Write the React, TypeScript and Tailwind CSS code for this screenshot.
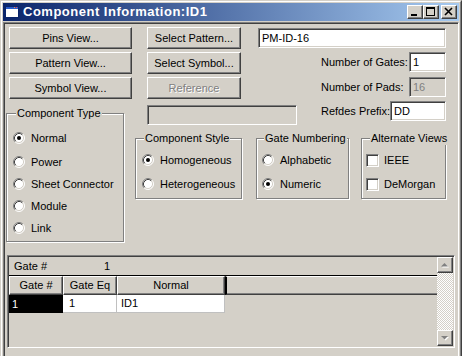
import React from 'react'

const raised = 'border border-white border-r-[#404040] border-b-[#404040] shadow-[inset_-1px_-1px_0_#808080]'
const sunken = 'border border-[#808080] border-r-white border-b-white shadow-[inset_1px_1px_0_#404040,inset_-1px_-1px_0_#d4d0c8]'

function Btn({ children, className = '', disabled }: { children: React.ReactNode; className?: string; disabled?: boolean }) {
  return (
    <div className={`h-[22px] flex items-center justify-center bg-[#d4d0c8] ${raised} ${className} ${disabled ? 'text-[#808080] [text-shadow:1px_1px_0_#fff]' : ''}`}>
      {children}
    </div>
  )
}

function Radio({ checked }: { checked?: boolean }) {
  return (
    <svg width="12" height="12" viewBox="0 0 12 12" className="shrink-0">
      <circle cx="6" cy="6" r="5" fill="#fff" />
      <path d="M2.11 9.89 A5.5 5.5 0 0 1 9.89 2.11" fill="none" stroke="#808080" />
      <path d="M9.89 2.11 A5.5 5.5 0 0 1 2.11 9.89" fill="none" stroke="#fff" />
      <path d="M2.82 9.18 A4.5 4.5 0 0 1 9.18 2.82" fill="none" stroke="#404040" />
      <path d="M9.18 2.82 A4.5 4.5 0 0 1 2.82 9.18" fill="none" stroke="#d4d0c8" />
      {checked && <circle cx="6" cy="6" r="2" fill="#000" />}
    </svg>
  )
}

function Option({ label, checked, className = '' }: { label: string; checked?: boolean; className?: string }) {
  return (
    <div className={`h-[16px] flex items-center gap-[6px] ${className}`}>
      <Radio checked={checked} />
      <span className="whitespace-nowrap">{label}</span>
    </div>
  )
}

function Check({ label }: { label: string }) {
  return (
    <div className="h-[16px] flex items-center gap-[5px]">
      <div className={`w-[13px] h-[13px] bg-white shrink-0 ${sunken}`} />
      <span>{label}</span>
    </div>
  )
}

function Group({ label, labelPos, className, children }: { label: string; labelPos: string; className: string; children: React.ReactNode }) {
  return (
    <div className={`relative shrink-0 border border-[#808080] shadow-[inset_1px_1px_0_#fff,1px_1px_0_#fff] ${className}`}>
      <span className={`absolute -top-[8px] ${labelPos} bg-[#d4d0c8] px-px leading-[14px] whitespace-nowrap`}>{label}</span>
      {children}
    </div>
  )
}

function Arrow({ up }: { up?: boolean }) {
  return (
    <svg width="8" height="5" viewBox="0 0 8 5">
      {up ? (
        <>
          <path d="M4.5 1 L8 4.5 L1 4.5 Z" fill="#fff" />
          <path d="M3.5 0 L7 3.5 L0 3.5 Z" fill="#808080" />
        </>
      ) : (
        <>
          <path d="M1 1 L8 1 L4.5 4.5 Z" fill="#fff" />
          <path d="M0 0 L7 0 L3.5 3.5 Z" fill="#808080" />
        </>
      )}
    </svg>
  )
}

export default function App() {
  return (
    <div className="w-[462px] h-[356px] overflow-hidden bg-[#d4d0c8] text-black text-[11px] font-['Liberation_Sans',Arial,sans-serif]">
      <div className="h-[360px] border border-[#d4d0c8] border-r-[#404040] border-b-[#404040]">
        <div className="h-full border border-white border-r-[#808080] border-b-[#808080] p-px flex flex-col">
          {/* Title bar */}
          <div className="h-[18px] shrink-0 flex items-center bg-[linear-gradient(to_right,#0a246a,#a6caf0)]">
            <svg width="16" height="16" viewBox="0 0 16 16" className="ml-px">
              <rect x="1.5" y="2.5" width="13" height="11" fill="#fff" stroke="#0a246a" />
              <rect x="2" y="3" width="12" height="2" fill="#2a5cc8" />
              <rect x="10" y="3" width="1" height="1" fill="#ff8040" />
              <rect x="12" y="3" width="1" height="1" fill="#ff4040" />
            </svg>
            <span className="ml-[3px] text-white font-bold text-[13px] tracking-[0.5px] leading-[16px] whitespace-nowrap">Component Information:ID1</span>
            <div className="ml-auto mr-[2px] flex items-center">
              <div className={`w-[16px] h-[14px] bg-[#d4d0c8] ${raised}`}>
                <svg width="14" height="12" viewBox="0 0 14 12"><rect x="3" y="8" width="6" height="2" fill="#000" /></svg>
              </div>
              <div className={`w-[16px] h-[14px] bg-[#d4d0c8] ${raised}`}>
                <svg width="14" height="12" viewBox="0 0 14 12">
                  <rect x="2.5" y="1.5" width="8" height="8" fill="none" stroke="#000" />
                  <rect x="2" y="1" width="9" height="2" fill="#000" />
                </svg>
              </div>
              <div className={`ml-[2px] w-[16px] h-[14px] bg-[#d4d0c8] ${raised}`}>
                <svg width="14" height="12" viewBox="0 0 14 12">
                  <path d="M3 2 L10 9 M10 2 L3 9" stroke="#000" strokeWidth="1.6" />
                </svg>
              </div>
            </div>
          </div>

          {/* Client area */}
          <div className={`mt-px flex-1 flex flex-col p-px ${sunken}`}>
            <div className="shrink-0 flex items-start pl-[1px]">
              {/* Left column */}
              <div className="w-[126px] shrink-0 flex flex-col">
                <div className="ml-[3px] mt-[3px] w-[123px] flex flex-col gap-[3px]">
                  <Btn>Pins View...</Btn>
                  <Btn>Pattern View...</Btn>
                  <Btn>Symbol View...</Btn>
                </div>
                <Group label="Component Type" labelPos="left-[9px]" className="mt-[14px] w-[118px] h-[129px] flex flex-col pt-[16px] pl-[6px]">
                  <Option label="Normal" checked />
                  <Option label="Power" className="mt-[8px]" />
                  <Option label="Sheet Connector" className="mt-[6px]" />
                  <Option label="Module" className="mt-[6px]" />
                  <Option label="Link" className="mt-[6px]" />
                </Group>
              </div>

              {/* Right area */}
              <div className="ml-[3px] w-[311px] shrink-0 flex flex-col">
                <div className="flex items-start pt-[3px]">
                  <div className="ml-[12px] w-[94px] flex flex-col gap-[3px]">
                    <Btn>Select Pattern...</Btn>
                    <Btn>Select Symbol...</Btn>
                    <Btn disabled>Reference</Btn>
                  </div>
                  <div className="ml-[17px] w-[188px] flex flex-col">
                    <div className={`mt-[1px] h-[20px] bg-white flex items-center pl-[3px] ${sunken}`}>PM-ID-16</div>
                    <div className="mt-[4px] flex items-center">
                      <span className="pl-[63px] whitespace-nowrap">Number of Gates:</span>
                      <div className={`ml-auto w-[37px] h-[20px] bg-white flex items-center pl-[3px] ${sunken}`}>1</div>
                    </div>
                    <div className="mt-[5px] flex items-center">
                      <span className="pl-[63px] whitespace-nowrap">Number of Pads:</span>
                      <div className={`ml-auto w-[37px] h-[20px] bg-[#d4d0c8] text-[#808080] flex items-center pl-[3px] ${sunken}`}>16</div>
                    </div>
                  </div>
                </div>
                <div className="mt-[2px] flex items-start">
                  <div className={`ml-[12px] mt-[4px] w-[150px] h-[20px] shrink-0 bg-[#d4d0c8] ${sunken}`} />
                  <div className="flex-1 flex items-center h-[20px]">
                    <span className="ml-[24px] whitespace-nowrap">Refdes Prefix:</span>
                    <div className={`ml-auto w-[56px] h-[20px] shrink-0 bg-white flex items-center pl-[3px] ${sunken}`}>DD</div>
                  </div>
                </div>
                <div className="mt-[13px] flex">
                  <Group label="Component Style" labelPos="left-[8px]" className="w-[107px] h-[61px] flex flex-col pt-[13px] pl-[6px] gap-[8px]">
                    <Option label="Homogeneous" checked />
                    <Option label="Heterogeneous" />
                  </Group>
                  <Group label="Gate Numbering" labelPos="left-[7px]" className="ml-[14px] w-[93px] h-[61px] flex flex-col pt-[13px] pl-[5px] gap-[8px]">
                    <Option label="Alphabetic" />
                    <Option label="Numeric" checked />
                  </Group>
                  <Group label="Alternate Views" labelPos="left-[8px]" className="ml-[12px] w-[85px] h-[61px] flex flex-col pt-[13px] pl-[4px] gap-[8px]">
                    <Check label="IEEE" />
                    <Check label="DeMorgan" />
                  </Group>
                </div>
              </div>
            </div>

            {/* Gate grid panel */}
            <div className={`ml-[2px] mt-[13px] w-[448px] h-[93px] shrink-0 flex p-px ${sunken}`}>
              <div className="flex-1 flex flex-col">
                <div className="h-[19px] flex items-center border-b border-black">
                  <span className="pl-[5px] w-[95px]">Gate #</span>
                  <span>1</span>
                </div>
                <div className="h-[19px] flex">
                  <div className={`w-[54px] flex items-center justify-center ${raised}`}>Gate #</div>
                  <div className={`w-[54px] flex items-center justify-center ${raised}`}>Gate Eq</div>
                  <div className={`w-[108px] flex items-center justify-center ${raised}`}>Normal</div>
                  <div className="flex-1 border-l-2 border-l-black border-t border-t-white border-b border-b-[#404040] shadow-[inset_0_-1px_0_#808080]" />
                </div>
                <div className="h-[18px] flex">
                  <div className="w-[54px] bg-black text-white flex items-center pl-[3px]">1</div>
                  <div className="w-[54px] bg-white flex items-center pl-[6px] border-r border-b border-[#c0c0c0]">1</div>
                  <div className="w-[108px] bg-white flex items-center pl-[4px] border-r border-b border-[#c0c0c0]">ID1</div>
                </div>
              </div>
              <div className="w-[16px] h-[89px] flex flex-col">
                <div className={`h-[16px] shrink-0 flex items-center justify-center bg-[#d4d0c8] ${raised}`}><Arrow up /></div>
                <div className="h-[57px] shrink-0 bg-[repeating-conic-gradient(#fff_0_25%,#d4d0c8_0_50%)] bg-[length:2px_2px]" />
                <div className={`h-[16px] shrink-0 flex items-center justify-center bg-[#d4d0c8] ${raised}`}><Arrow /></div>
              </div>
            </div>
          </div>
        </div>
      </div>
    </div>
  )
}
